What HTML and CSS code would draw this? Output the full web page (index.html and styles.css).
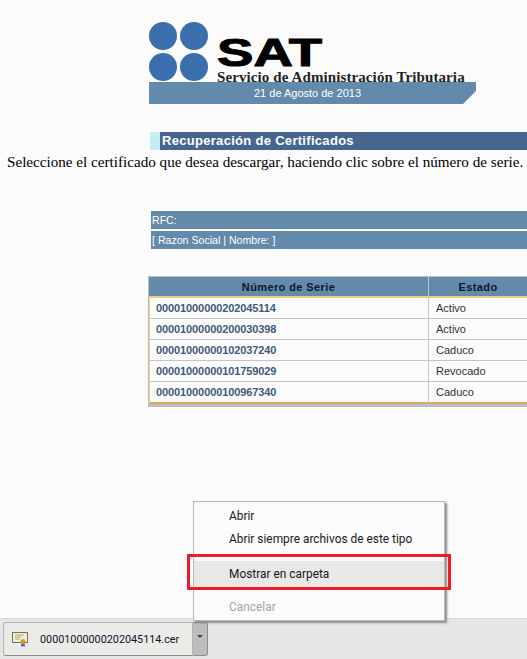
FILE: index.html
```html
<!DOCTYPE html>
<html lang="es">
  <head>
    <meta charset="utf-8">
    <meta name="viewport" content="width=device-width">
    <title>Recuperación de Certificados</title>
    <link rel="stylesheet" href="styles.css">
  </head>
  <body>
  <div class="page">
    <div class="header">
      <div class="logo">
        <div class="circles">
          <span></span><span></span><span></span><span></span>
        </div>
        <div class="logoText">
          <div class="sat">SAT</div>
          <div class="sat2">Servicio de Administración Tributaria</div>
        </div>
      </div>
      <div class="dateBar">21 de Agosto de 2013</div>
    </div>

    <h1 class="title"><span>Recuperación de Certificados</span></h1>
    <p class="intro">Seleccione el certificado que desea descargar, haciendo clic sobre el número de serie.</p>

    <div class="infoBar">RFC:</div>
    <div class="infoBar">[ Razon Social | Nombre: ]</div>

    <table class="certs">
      <thead>
        <tr><th class="colSerie">Número de Serie</th><th>Estado</th></tr>
      </thead>
      <tbody>
        <tr><td class="serie">00001000000202045114</td><td>Activo</td></tr>
        <tr><td class="serie">00001000000200030398</td><td>Activo</td></tr>
        <tr><td class="serie">00001000000102037240</td><td>Caduco</td></tr>
        <tr><td class="serie">00001000000101759029</td><td>Revocado</td></tr>
        <tr><td class="serie">00001000000100967340</td><td>Caduco</td></tr>
      </tbody>
    </table>
  </div>

  <div class="downloads">
    <div class="dlItem">
      <svg class="certIcon" width="16" height="15" viewBox="0 0 16 15" xmlns="http://www.w3.org/2000/svg">
        <rect x="0.5" y="0.5" width="15" height="10" fill="#F6EFD8" stroke="#77705A"/>
        <path d="M3 3h9M3 5h6M3 7h5" stroke="#B0A47C" fill="none"/>
        <path d="M9.5 10l-.5 5 1.5-1 .5 1 .5-1 1.5 1-.5-5z" fill="#3D6FC0"/>
        <circle cx="11" cy="9.5" r="2.5" fill="#E0982C"/>
      </svg>
      <span class="dlName">00001000000202045114.cer</span>
    </div>
    <div class="dlArrow"></div>
  </div>

  <div class="contextMenu">
    <div class="menuItem">Abrir</div>
    <div class="menuItem">Abrir siempre archivos de este tipo</div>
    <div class="menuSep"></div>
    <div class="menuItem active">Mostrar en carpeta</div>
    <div class="menuSep short"></div>
    <div class="menuItem disabled">Cancelar</div>
  </div>
  <div class="redBox"></div>
  </body>
</html>
```

FILE: styles.css
```css
html, body {
  height: 100%;
}
body {
  margin: 0;
  height: 659px;
  overflow: hidden;
  position: relative;
  display: flex;
  flex-direction: column;
  background-color: #FBFBFB;
  font-family: "Liberation Sans", Arial, sans-serif;
}
.page {
  flex: 1;
  min-height: 0;
  overflow: hidden;
}

/* Logo */
.header {
  margin: 22px 0 0 149px;
  width: 327px;
}
.logo {
  display: flex;
  height: 60px;
  overflow: hidden;
}
.circles {
  display: grid;
  grid-template-columns: 28px 28px;
  grid-auto-rows: 28px;
  gap: 3px;
}
.circles span {
  border-radius: 50%;
  background-color: #3B6EAC;
}
.logoText {
  margin-left: 9px;
  padding-top: 13px;
}
.sat {
  width: 78px;
  height: 36px;
  font-size: 39px;
  line-height: 36px;
  font-weight: bold;
  color: #000000;
  -webkit-text-stroke: 1px #000000;
  transform: scaleX(1.4);
  transform-origin: left center;
}
.sat2 {
  font-family: "Liberation Serif", serif;
  font-size: 15px;
  line-height: 12px;
  letter-spacing: 0.1px;
  font-weight: bold;
  color: #222222;
  white-space: nowrap;
}
.dateBar {
  height: 22px;
  padding-right: 10px;
  box-sizing: border-box;
  text-align: center;
  font-size: 11px;
  line-height: 22px;
  color: #FFFFFF;
  background-color: #6389AB;
  clip-path: polygon(0 0, 100% 0, 100% 9px, 314px 100%, 0 100%);
}

/* Title */
.title {
  margin: 28px 0 0 150px;
  height: 18px;
  border-left: 10px solid #C6EDF5;
  background-color: #46668F;
  font-size: 13px;
  line-height: 18px;
  letter-spacing: 0.3px;
  font-weight: bold;
  color: #FFFFFF;
}
.title span {
  margin-left: 2px;
}
.intro {
  margin: 2px 0 0 7px;
  font-family: "Liberation Serif", serif;
  font-size: 15.15px;
  line-height: 19px;
  white-space: nowrap;
  color: #000000;
}

/* RFC */
.intro + .infoBar {
  margin-top: 40px;
}
.infoBar {
  margin: 2px 0 0 151px;
  height: 18px;
  padding-left: 1px;
  font-size: 10.6px;
  line-height: 18px;
  color: #FFFFFF;
  background-color: #6389AB;
}

/* Table */
.certs {
  margin: 27px 0 0 148px;
  width: 379px;
  border-collapse: separate;
  border-spacing: 0;
  table-layout: fixed;
  border-top: 1px solid #BDBDC2;
  border-left: 1px solid #BDBDC2;
  border-bottom: 3px solid #BDBDBD;
  font-size: 11px;
}
.certs th {
  height: 19px;
  padding: 0;
  background-color: #6389AB;
  color: #0C1A2B;
  letter-spacing: 0.4px;
  font-weight: bold;
  border-bottom: 2px solid #F0CB85;
}
.certs th.colSerie {
  width: 279px;
  border-right: 1px solid #C4C4CC;
}
.certs td {
  height: 20px;
  padding: 0 0 0 7px;
  border-bottom: 1px solid #C4C4CC;
  color: #333333;
}
.certs td.serie {
  padding-left: 6px;
  letter-spacing: -0.1px;
  font-weight: bold;
  color: #3F5A7C;
  border-right: 1px solid #C4C4CC;
  border-left: 1px solid #F0CB85;
}
.certs tbody tr:last-child td {
  border-bottom: 2px solid #DBA95F;
}

/* Download bar */
.downloads {
  flex: none;
  height: 41px;
  padding: 3px 0 3px 3px;
  box-sizing: border-box;
  display: flex;
  background-color: #E6E6E4;
  border-top: 1px solid #D8D8D6;
}
.dlItem {
  width: 190px;
  box-sizing: border-box;
  display: flex;
  align-items: center;
  padding-left: 8px;
  gap: 12px;
  background-color: #EBEBE8;
  border: 1px solid #B4B4B4;
  border-bottom-color: #8C8C8C;
  border-radius: 3px 0 0 3px;
}
.dlName {
  font-family: Roboto, sans-serif;
  font-size: 10.8px;
  color: #12122A;
}
.dlArrow {
  width: 14px;
  position: relative;
  background-color: #BDBDBD;
  border: 1px solid #8C8C8C;
  border-left: none;
  border-radius: 0 3px 3px 0;
}
.dlArrow:after {
  content: "";
  position: absolute;
  left: 4px;
  top: 12px;
  border-top: 3px solid #444444;
  border-left: 3px solid transparent;
  border-right: 3px solid transparent;
}

/* Context menu */
.contextMenu {
  position: absolute;
  left: 193px;
  top: 501px;
  width: 252px;
  height: 120px;
  box-sizing: border-box;
  padding-top: 3px;
  background-color: #FBFBFB;
  border: 1px solid #B9B9B9;
  box-shadow: 2px 2px 2px #8A8A8A;
  font-family: Roboto, sans-serif;
  font-size: 11.9px;
}
.menuItem {
  height: 23px;
  line-height: 23px;
  padding-left: 35px;
  color: #1A1A1A;
}
.menuSep {
  height: 10px;
}
.menuSep.short {
  height: 9px;
}
.menuItem.active {
  height: 26px;
  line-height: 26px;
  background-color: #E8E9E6;
  color: #1F1226;
}
.menuItem.disabled {
  color: #A5A5A5;
}
.redBox {
  position: absolute;
  left: 187px;
  top: 554px;
  width: 264px;
  height: 36px;
  box-sizing: border-box;
  border: 3px solid #EE1C25;
}
```
